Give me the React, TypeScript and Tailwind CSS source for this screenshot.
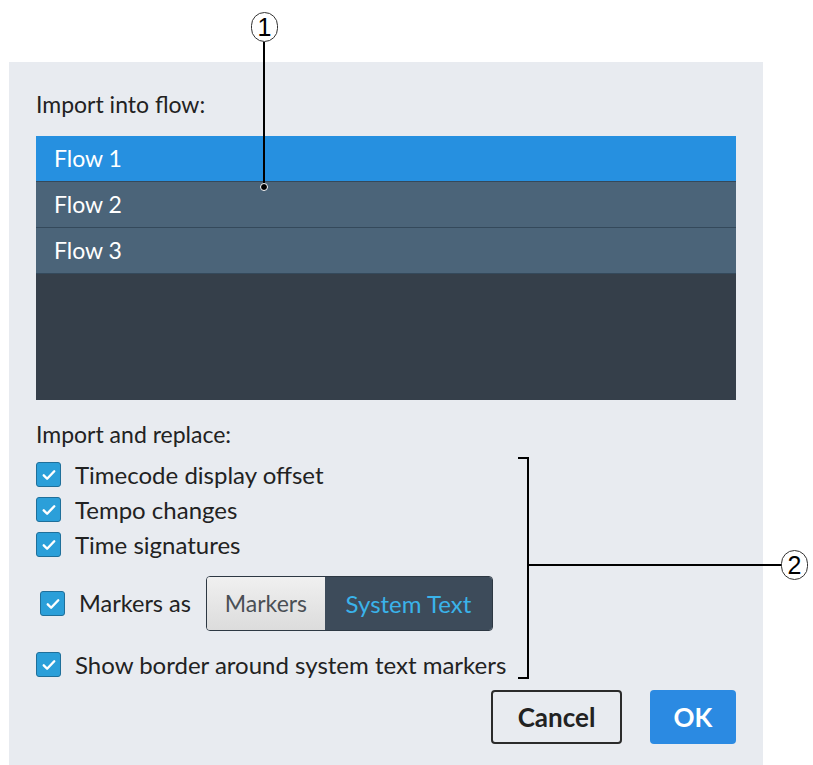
import React from 'react';

const font = { fontFamily: 'Lato, "Open Sans", sans-serif' };
const calloutFont = { fontFamily: '"Liberation Sans", sans-serif' };

function Check({ className = '' }: { className?: string }) {
	return (
		<span className={`flex h-[25px] w-[25px] shrink-0 items-center justify-center rounded-[3px] border border-[#1f6f9a] bg-[#2b9fd9] ${className}`}>
			<svg viewBox="0 0 24 24" className="h-[18px] w-[18px]" fill="none" stroke="white" strokeWidth="3.2" strokeLinecap="round" strokeLinejoin="round">
				<path d="M5 12.5l4.5 4.5L19 7" />
			</svg>
		</span>
	);
}

function Option({ label }: { label: string }) {
	return (
		<div className="flex h-[35px] items-center gap-[14px]">
			<Check />
			<span className="text-[24px] leading-[30px] text-[#222]">{label}</span>
		</div>
	);
}

const flows = ['Flow 1', 'Flow 2', 'Flow 3'];

export default function App() {
	return (
		<div className="relative h-[765px] w-[813px] overflow-hidden bg-white" style={font}>
			<div className="ml-[9px] mt-[62px] flex h-[703px] w-[754px] flex-col bg-[#e8ebf0] px-[27px] pt-[28px]">
				<div className="text-[23px] leading-[28px] text-[#222]">Import into flow:</div>

				<div className="mt-[18px] w-[700px] bg-[#353f4a]">
					{flows.map((f, i) => (
						<div
							key={f}
							className={`flex h-[46px] items-center border-b border-[#34495b] px-[18px] text-[23px] text-white ${i === 0 ? 'bg-[#2690e0]' : 'bg-[#4b6479]'}`}
						>
							{f}
						</div>
					))}
					<div className="h-[126px]" />
				</div>

				<div className="mt-[20px] text-[23px] leading-[28px] text-[#222]">Import and replace:</div>

				<div className="mt-[9px] flex flex-col">
					<Option label="Timecode display offset" />
					<Option label="Tempo changes" />
					<Option label="Time signatures" />
				</div>

				<div className="mt-[14px] flex items-center pl-[4px]">
					<Check />
					<span className="ml-[14px] text-[23.5px] text-[#222]">Markers as</span>
					<div className="ml-[15px] flex h-[55px] overflow-hidden rounded-[4px] border border-[#2d3843]">
						<div className="flex w-[118px] items-center justify-center bg-gradient-to-b from-[#f0f0f0] to-[#dcdcdc] text-[23px] text-[#4a4f55]">
							Markers
						</div>
						<div className="flex w-[167px] items-center justify-center bg-[#3d4b5a] text-[24px] text-[#3ab3ea]">
							System Text
						</div>
					</div>
				</div>

				<div className="mt-[16px]">
					<Option label="Show border around system text markers" />
				</div>

				<div className="mt-[8px] flex justify-end gap-[28px]">
					<button className="h-[54px] w-[131px] rounded-[4px] border-2 border-[#2b2b2b] text-[26px] font-bold text-[#222]">
						Cancel
					</button>
					<button className="h-[54px] w-[86px] rounded-[4px] bg-[#2b8ae2] text-[26px] font-bold text-white">
						OK
					</button>
				</div>
			</div>

			{/* callout 1 */}
			<div className="absolute left-[251px] top-[12px] flex h-[30px] w-[27px] items-center justify-center rounded-full border border-[#333] bg-white text-[25px] leading-none text-black" style={calloutFont}>
				1
			</div>
			<div className="absolute left-[263px] top-[42px] h-[145px] w-[2px] bg-black" />
			<div className="absolute left-[260px] top-[183px] h-[8px] w-[8px] rounded-full border border-white bg-black" />

			{/* callout 2 bracket */}
			<div className="absolute left-[518px] top-[457px] h-[222px] w-[11px] border-y-2 border-r-2 border-black" />
			<div className="absolute left-[528px] top-[564px] h-[2px] w-[253px] bg-black" />
			<div className="absolute left-[781px] top-[550px] flex h-[30px] w-[27px] items-center justify-center rounded-full border border-[#333] bg-white text-[25px] leading-none text-black" style={calloutFont}>
				2
			</div>
		</div>
	);
}
